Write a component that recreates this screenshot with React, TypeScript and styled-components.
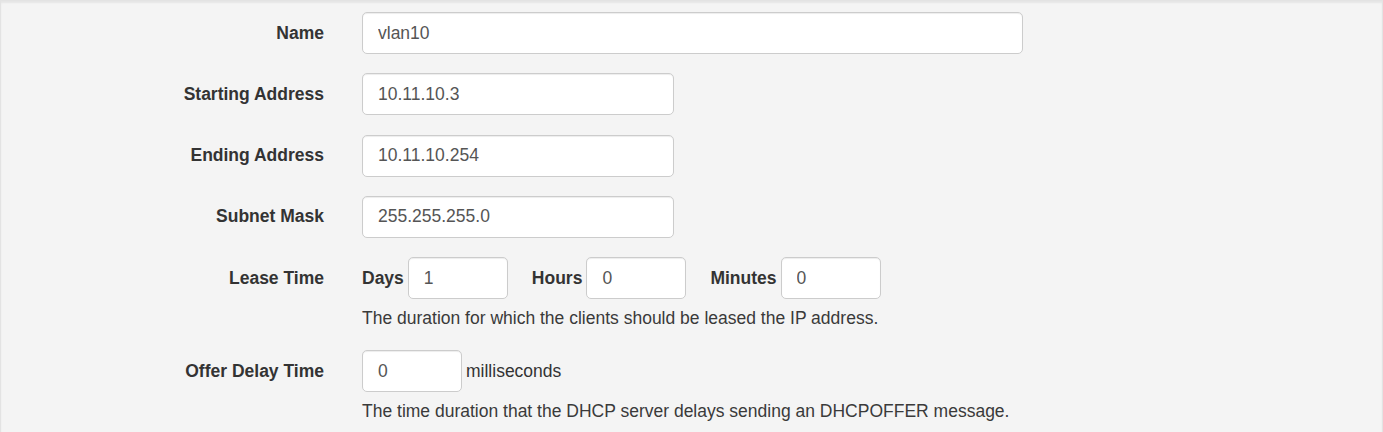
import React from "react";
import styled, { createGlobalStyle } from "styled-components";

const Global = createGlobalStyle`
  html, body { margin: 0; padding: 0; background: #ffffff; }
  body { font-family: "Liberation Sans", Arial, sans-serif; }
  * { box-sizing: border-box; }
`;

const Panel = styled.div`
  width: 1383px;
  background: #f4f4f4;
  border: 1px solid #e3e3e3;
  box-shadow: inset 0 2px 2px rgba(0, 0, 0, 0.06);
  padding: 11px 0 40px 0;
  display: flex;
  flex-direction: column;
  gap: 19.3px;
`;

const Row = styled.div`
  display: grid;
  grid-template-columns: 323px 1fr;
  column-gap: 38px;
  align-items: start;
`;

const Label = styled.label`
  font-size: 17.5px;
  font-weight: bold;
  color: #333333;
  text-align: right;
  line-height: 25px;
  padding-top: 8.5px;
`;

const Field = styled.div`
  display: flex;
  flex-direction: column;
  align-items: flex-start;
`;

const Input = styled.input<{ $w: number }>`
  width: ${(p) => p.$w}px;
  height: 42px;
  padding: 7px 15px;
  font-family: "Liberation Sans", Arial, sans-serif;
  font-size: 17.5px;
  color: #555555;
  background: #ffffff;
  border: 1px solid #cccccc;
  border-radius: 5px;
  box-shadow: inset 0 1px 1px rgba(0, 0, 0, 0.075);
  outline: none;
`;

const Inline = styled.div`
  display: flex;
  align-items: center;
  gap: 24px;
`;

const Pair = styled.div`
  display: flex;
  align-items: center;
  gap: 4px;
`;

const InlineLabel = styled.span<{ $bold?: boolean }>`
  font-size: 17.5px;
  font-weight: ${(p) => (p.$bold ? "bold" : "normal")};
  color: #333333;
  line-height: 25px;
`;

const Help = styled.p`
  margin: 7px 0 0 0;
  font-size: 17.5px;
  line-height: 25px;
  color: #3a3a3a;
`;

export default function App() {
  return (
    <>
      <Global />
      <Panel>
        <Row>
          <Label>Name</Label>
          <Field>
            <Input $w={661} defaultValue="vlan10" />
          </Field>
        </Row>
        <Row>
          <Label>Starting Address</Label>
          <Field>
            <Input $w={312} defaultValue="10.11.10.3" />
          </Field>
        </Row>
        <Row>
          <Label>Ending Address</Label>
          <Field>
            <Input $w={312} defaultValue="10.11.10.254" />
          </Field>
        </Row>
        <Row>
          <Label>Subnet Mask</Label>
          <Field>
            <Input $w={312} defaultValue="255.255.255.0" />
          </Field>
        </Row>
        <Row>
          <Label>Lease Time</Label>
          <Field>
            <Inline>
              <Pair>
                <InlineLabel $bold>Days</InlineLabel>
                <Input $w={100} defaultValue="1" />
              </Pair>
              <Pair>
                <InlineLabel $bold>Hours</InlineLabel>
                <Input $w={100} defaultValue="0" />
              </Pair>
              <Pair>
                <InlineLabel $bold>Minutes</InlineLabel>
                <Input $w={100} defaultValue="0" />
              </Pair>
            </Inline>
            <Help>The duration for which the clients should be leased the IP address.</Help>
          </Field>
        </Row>
        <Row>
          <Label>Offer Delay Time</Label>
          <Field>
            <Pair>
              <Input $w={100} defaultValue="0" />
              <InlineLabel>milliseconds</InlineLabel>
            </Pair>
            <Help>The time duration that the DHCP server delays sending an DHCPOFFER message.</Help>
          </Field>
        </Row>
      </Panel>
    </>
  );
}
